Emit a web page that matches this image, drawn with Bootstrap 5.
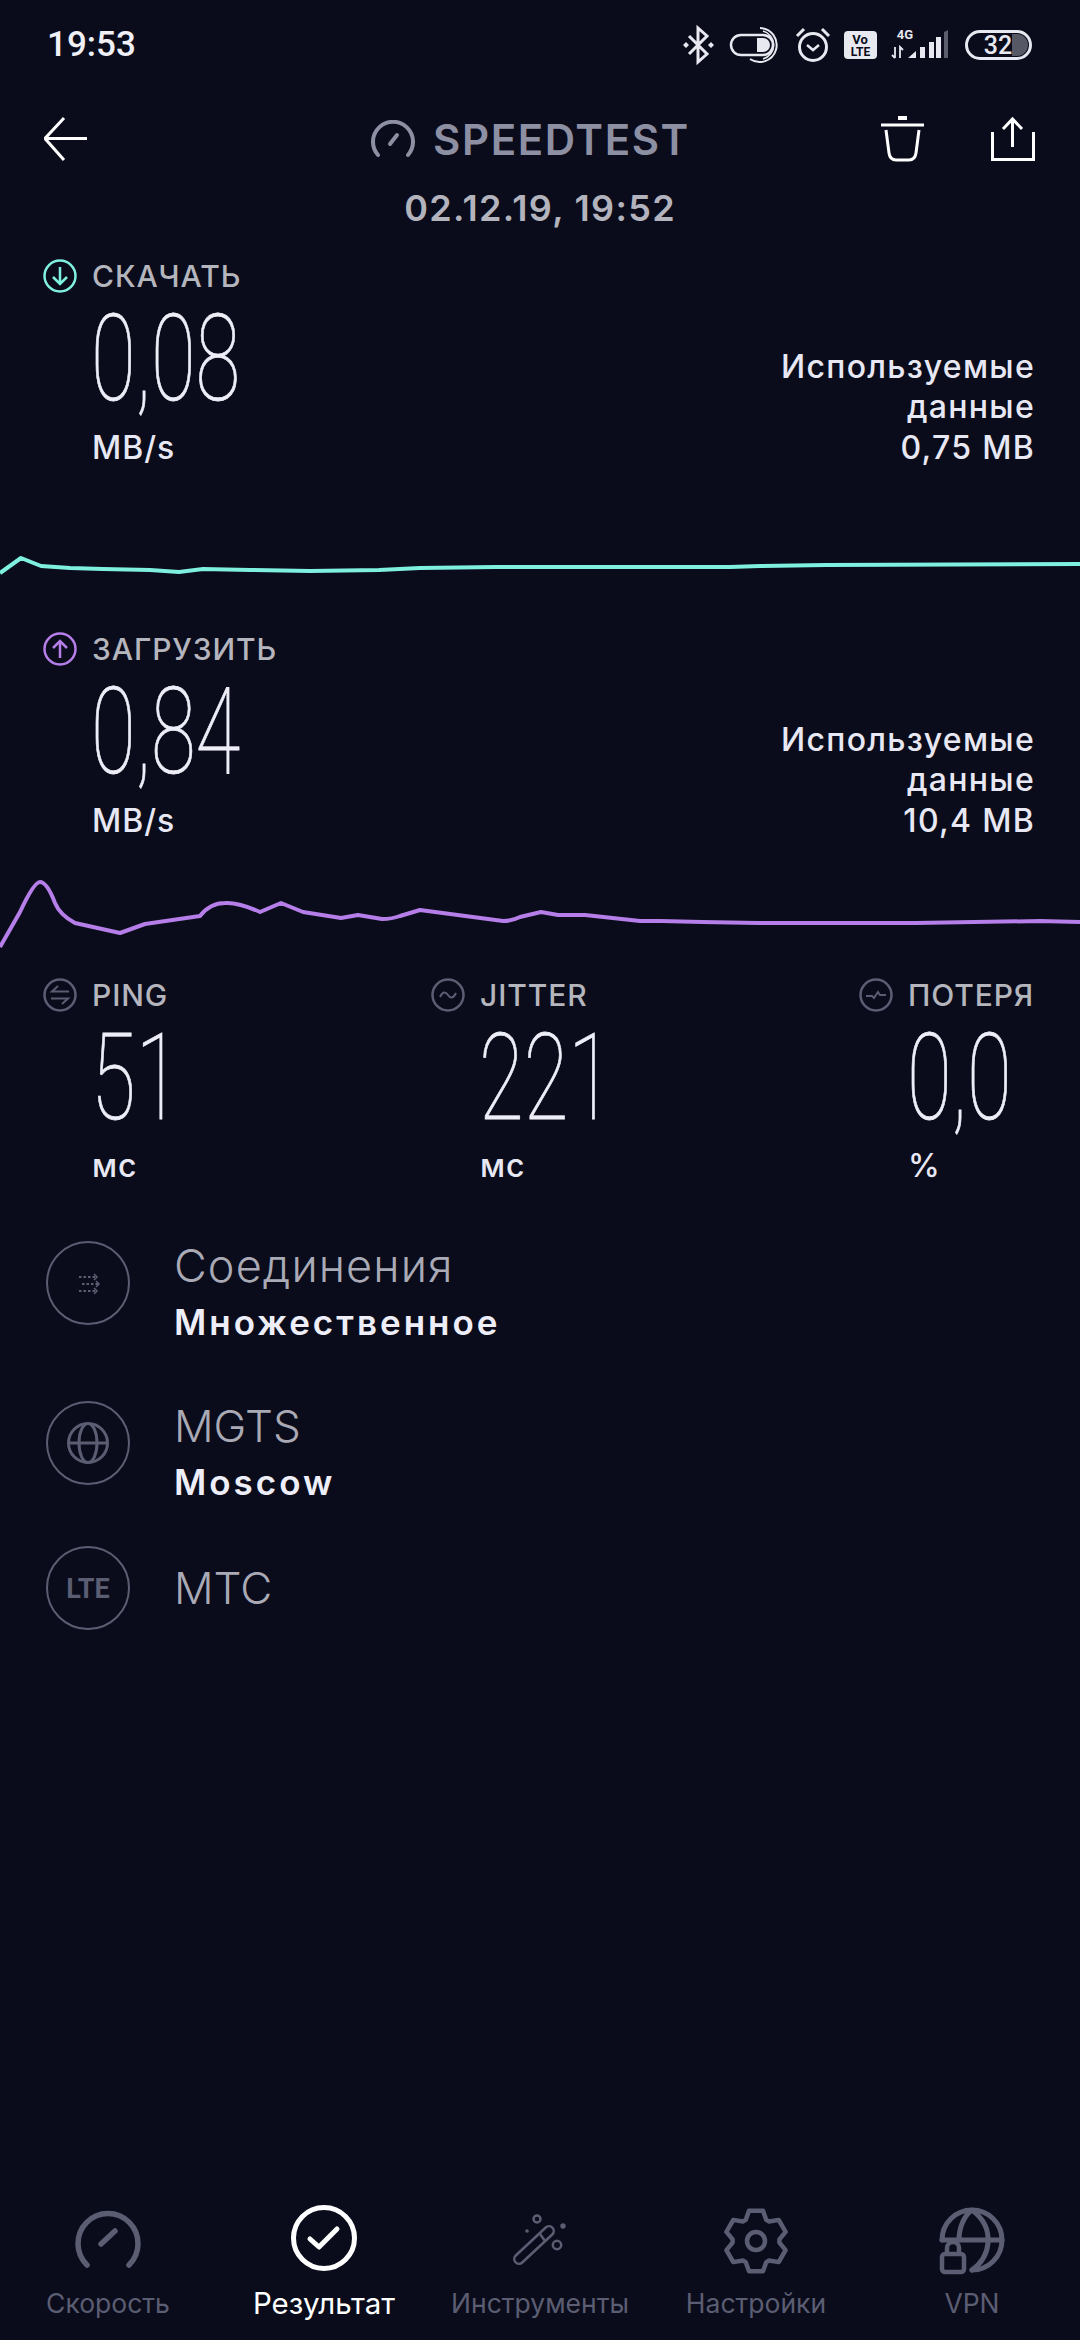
<!DOCTYPE html>
<html lang="ru">
<head>
  <meta charset="UTF-8">
  <meta name="viewport" content="width=device-width, initial-scale=1.0">
  <title>Speedtest</title>
  <link href="https://cdn.jsdelivr.net/npm/bootstrap@5.3.2/dist/css/bootstrap.min.css" rel="stylesheet">
  <style>
    body {
      background-color: #0a0c1b;
      font-family: Inter, "Noto Sans", sans-serif;
      color: #e8e8f4;
    }
    .phone-screen {
      width: 1080px;
      height: 2340px;
      overflow: hidden;
    }
    .status-bar {
      height: 90px;
      padding: 0 45px 0 47px;
    }
    .status-time {
      font-family: Roboto, sans-serif;
      font-size: 35px;
      font-weight: 500;
      color: #f0f0f6;
    }
    .top-bar {
      height: 98px;
      padding: 0 45px 0 44px;
      display: grid;
      grid-template-columns: 1fr auto 1fr;
      align-items: center;
    }
    .top-actions {
      gap: 66px;
    }
    .title-block {
      gap: 18px;
      margin-right: 18px;
      color: #8d8fa3;
      font-size: 42px;
      font-weight: 600;
      letter-spacing: 1.6px;
    }
    .date-line {
      height: 64px;
      line-height: 40px;
      font-size: 36px;
      font-weight: 600;
      letter-spacing: 1.3px;
      color: #b3b3bd;
    }
    .metric-block {
      padding: 0 45px 0 43px;
    }
    .label-row {
      height: 48px;
      gap: 15px;
      font-size: 30px;
      font-weight: 500;
      letter-spacing: 0.9px;
      color: #b5b5bd;
    }
    .big-number {
      height: 116px;
      line-height: 119px;
      padding-left: 48px;
      font-family: Roboto, sans-serif;
      font-weight: 100;
      font-size: 120px;
      color: #eeeef8;
      white-space: nowrap;
      -webkit-text-stroke: 0.8px #eeeef8;
    }
    .big-number span {
      display: inline-block;
      transform: scaleX(0.68);
      transform-origin: left center;
    }
    .unit-text {
      height: 40px;
      line-height: 40px;
      margin-top: 12px;
      padding-left: 49px;
      font-size: 32px;
      font-weight: 500;
      letter-spacing: 1px;
    }
    .used-data {
      width: 360px;
      line-height: 40.5px;
      font-size: 32px;
      font-weight: 500;
      letter-spacing: 1.3px;
    }
    .chart-line {
      display: block;
      width: 1080px;
    }
    .chart-down { height: 157px; }
    .chart-up { height: 130px; }
    .stat-ping { width: 388px; }
    .stat-jitter { width: 428px; }
    .stat-unit {
      margin-top: 11px;
    }
    .info-list {
      margin-top: 52px;
      padding-left: 46px;
    }
    .info-row {
      gap: 44px;
    }
    .info-row-first { margin-bottom: 47px; }
    .info-row-second { margin-bottom: 35px; }
    .info-icon {
      flex: none;
      width: 84px;
      height: 84px;
      margin-top: 3px;
    }
    .info-row-last .info-icon { margin-top: 0; }
    .info-name {
      height: 56px;
      line-height: 56px;
      font-size: 45px;
      font-weight: 300;
      letter-spacing: 1.1px;
      color: #a9aab5;
    }
    .info-name-latin {
      font-size: 44px;
      letter-spacing: 0;
    }
    .info-value {
      height: 57px;
      line-height: 57px;
      font-size: 35px;
      font-weight: 600;
      letter-spacing: 3px;
      color: #eeeef8;
    }
    .bottom-nav {
      height: 137px;
      color: #5b5d72;
    }
    .nav-cell {
      width: 216px;
      font-size: 26.5px;
    }
    .nav-cell svg {
      display: block;
      margin: 0 auto;
    }
    .nav-active {
      color: #ffffff;
      font-size: 29.5px;
    }
    .nav-label {
      line-height: 40px;
      margin-top: 4px;
      white-space: nowrap;
    }
  </style>
</head>
<body>
  <div class="phone-screen d-flex flex-column">

    <!-- Status bar -->
    <div class="status-bar d-flex align-items-center justify-content-between">
      <div class="status-time">19:53</div>
      <svg width="355" height="50" viewBox="680 20 355 50" fill="none" stroke="#e8e8f0" stroke-width="3">
        <path d="M689 36 L707 54 L698 62 V28 L707 36 L689 54"/>
        <path d="M686 42 L689 45 L686 48 L683 45Z M711 42 L714 45 L711 48 L708 45Z" fill="#e8e8f0" stroke="none"/>
        <rect x="731" y="35" width="42" height="20" rx="10" stroke-width="2.5"/>
        <path d="M757 38 H763 A7 7 0 0 1 763 52 H757Z" fill="#e8e8f0" stroke="none"/>
        <path d="M760 28 A17 17 0 1 1 750 59" stroke-width="2"/>
        <path d="M763 31 A14.5 14.5 0 0 1 763 59" stroke-width="1.5"/>
        <circle cx="813" cy="47" r="13.5"/>
        <path d="M807 45 L813 50 L819 45" stroke-width="2.5"/>
        <path d="M797 36 L804 29 M829 36 L822 29"/>
        <rect x="844" y="31" width="33" height="28" rx="4" fill="#e8e8f0" stroke="none"/>
        <text x="860" y="44" text-anchor="middle" font-family="Roboto, sans-serif" font-size="13" font-weight="700" fill="#0a0c1b" stroke="none">Vo</text>
        <text x="860.5" y="56" text-anchor="middle" font-family="Roboto, sans-serif" font-size="12" font-weight="700" fill="#0a0c1b" stroke="none">LTE</text>
        <text x="905" y="39" text-anchor="middle" font-family="Roboto, sans-serif" font-size="13" font-weight="700" fill="#e8e8f0" stroke="none">4G</text>
        <path d="M895 47 V58 M892 55 L895 58 M900 58 V47 L903 50" stroke-width="1.8"/>
        <path d="M908 58 L916 51 V58Z M920 47 H925 V58 H920Z M929 42 H934 V58 H929Z M936 37 H941 V58 H936Z" fill="#e8e8f0" stroke="none"/>
        <path d="M944 32 L948 30 V58 H944Z" fill="#5b5d6c" stroke="none"/>
        <path d="M1012 34 H1017 A11 11 0 0 1 1017 56 H1012Z" fill="#565866" stroke="none"/>
        <rect x="966.5" y="31.5" width="64" height="27" rx="13.5"/>
        <text x="998" y="54" text-anchor="middle" font-family="Roboto, sans-serif" font-size="25" font-weight="500" fill="#e8e8f0" stroke="none">32</text>
      </svg>
    </div>

    <!-- Header -->
    <div class="top-bar">
      <svg width="44" height="46" viewBox="45 117 44 46" fill="none" stroke="#fff" stroke-width="3">
        <path d="M88 139.5 H47 M65 119 L46 139.5 L65 161"/>
      </svg>
      <div class="title-block d-flex align-items-center">
        <svg width="44" height="38" viewBox="372 118 44 38" fill="none" stroke="#8d8fa3" stroke-width="4" stroke-linecap="round">
          <path d="M379 153 A20 20 0 1 1 409 153"/>
          <path d="M391 142 L398 133"/>
        </svg>
        <span>SPEEDTEST</span>
      </div>
      <div class="top-actions d-flex justify-content-end">
        <svg width="44" height="46" viewBox="882 117 44 46" fill="none" stroke="#fff" stroke-width="3">
          <path d="M882 126 H925"/>
          <path d="M899 119 H908" stroke-width="4"/>
          <path d="M887 131 L890 154 Q891 161 897 161 H910 Q916 161 917 154 L920 131"/>
        </svg>
        <svg width="44" height="46" viewBox="992 117 44 46" fill="none" stroke="#fff" stroke-width="3">
          <path d="M1013.5 148 V120 M1004 130 L1013.5 120 L1023 130"/>
          <path d="M993.5 133 V160.5 H1034.5 V133"/>
        </svg>
      </div>
    </div>
    <div class="date-line text-center">02.12.19, 19:52</div>

    <!-- Download -->
    <div class="metric-block d-flex justify-content-between align-items-end">
      <div>
        <div class="label-row d-flex align-items-center">
          <svg width="34" height="34" viewBox="0 0 34 34" fill="none" stroke="#7ff0e0" stroke-width="2.5">
            <circle cx="17" cy="17" r="15.5"/>
            <path d="M17 8 V25 M10 18 L17 25 L24 18"/>
          </svg>
          <span>СКАЧАТЬ</span>
        </div>
        <div class="big-number"><span>0,08</span></div>
        <div class="unit-text">MB/s</div>
      </div>
      <div class="used-data text-end">Используемые<br>данные<br>0,75 MB</div>
    </div>
    <svg class="chart-line chart-down" viewBox="0 468 1080 157" fill="none" stroke="#7ff0e0" stroke-width="4" stroke-linejoin="round">
      <path d="M0 573 L21 558 L41 566 L70 568 L103 569 L150 570 L179 572 L203 569 L250 570 L310 571 L379 570 L420 568 L496 567 L730 567 L760 566 L826 565 L1080 564"/>
    </svg>

    <!-- Upload -->
    <div class="metric-block d-flex justify-content-between align-items-end">
      <div>
        <div class="label-row d-flex align-items-center">
          <svg width="34" height="34" viewBox="0 0 34 34" fill="none" stroke="#b57ee8" stroke-width="2.5">
            <circle cx="17" cy="17" r="15.5"/>
            <path d="M17 26 V9 M10 16 L17 9 L24 16"/>
          </svg>
          <span>ЗАГРУЗИТЬ</span>
        </div>
        <div class="big-number"><span>0,84</span></div>
        <div class="unit-text">MB/s</div>
      </div>
      <div class="used-data text-end">Используемые<br>данные<br>10,4 MB</div>
    </div>
    <svg class="chart-line chart-up" viewBox="0 841 1080 130" fill="none" stroke="#b57ee8" stroke-width="4" stroke-linejoin="round">
      <path d="M0 947 L20 912 Q34 882 40 882 Q47 882 55 903 Q60 915 75 923 L120 933 L145 924 L200 916 Q210 903 225 903 Q238 902 260 912 L281 903 L303 912 L341 918 L358 915 L382 919 Q392 919 400 916 L420 910 L503 921 Q512 921 520 917 L541 912 L558 915 H585 L640 921 H661 L702 922 L758 923 H916 L1040 921 L1080 922"/>
    </svg>

    <!-- Ping, jitter, loss -->
    <div class="metric-block d-flex">
      <div class="stat-ping flex-shrink-0">
        <div class="label-row d-flex align-items-center">
          <svg width="34" height="34" viewBox="0 0 34 34" fill="none" stroke="#5b5d72" stroke-width="2.5">
            <circle cx="17" cy="17" r="15.5"/>
            <path d="M26 13.5 H9 L15 8 M8 20.5 H25 L19 26" stroke-width="2"/>
          </svg>
          <span>PING</span>
        </div>
        <div class="big-number"><span>51</span></div>
        <div class="unit-text stat-unit">мс</div>
      </div>
      <div class="stat-jitter flex-shrink-0">
        <div class="label-row d-flex align-items-center">
          <svg width="34" height="34" viewBox="0 0 34 34" fill="none" stroke="#5b5d72" stroke-width="2.5">
            <circle cx="17" cy="17" r="15.5"/>
            <path d="M9 19 Q13 11 17 17 T25 15" stroke-width="2"/>
          </svg>
          <span>JITTER</span>
        </div>
        <div class="big-number"><span>221</span></div>
        <div class="unit-text stat-unit">мс</div>
      </div>
      <div class="flex-shrink-0">
        <div class="label-row d-flex align-items-center">
          <svg width="34" height="34" viewBox="0 0 34 34" fill="none" stroke="#5b5d72" stroke-width="2.5">
            <circle cx="17" cy="17" r="15.5"/>
            <path d="M7 18 H13 L15 20 L19 14 L21 17 H27" stroke-width="2"/>
          </svg>
          <span>ПОТЕРЯ</span>
        </div>
        <div class="big-number"><span>0,0</span></div>
        <div class="unit-text stat-unit">%</div>
      </div>
    </div>

    <!-- Connection info -->
    <div class="info-list">
      <div class="info-row info-row-first d-flex align-items-start">
        <svg class="info-icon" viewBox="0 0 84 84" fill="none" stroke="#5b5d72" stroke-width="2">
          <circle cx="42" cy="42" r="41"/>
          <path d="M33 36 H50 M36 43 H52 M33 50 H50" stroke-dasharray="2.5 2"/>
          <path d="M48 33 L51 36 L48 39 M50 40 L53 43 L50 46 M48 47 L51 50 L48 53" stroke-width="1.5"/>
        </svg>
        <div>
          <div class="info-name">Соединения</div>
          <div class="info-value">Множественное</div>
        </div>
      </div>
      <div class="info-row info-row-second d-flex align-items-start">
        <svg class="info-icon" viewBox="0 0 84 84" fill="none" stroke="#5b5d72" stroke-width="2">
          <circle cx="42" cy="42" r="41"/>
          <g stroke-width="3">
            <circle cx="42" cy="42" r="19.5"/>
            <ellipse cx="42" cy="42" rx="9" ry="19.5"/>
            <path d="M22.5 42 H61.5"/>
          </g>
        </svg>
        <div>
          <div class="info-name info-name-latin">MGTS</div>
          <div class="info-value">Moscow</div>
        </div>
      </div>
      <div class="info-row info-row-last d-flex align-items-center">
        <svg class="info-icon" viewBox="0 0 84 84" fill="none" stroke="#5b5d72" stroke-width="2">
          <circle cx="42" cy="42" r="41"/>
          <text x="42" y="52" text-anchor="middle" font-family="Roboto, sans-serif" font-size="27" font-weight="700" fill="#5b5d72" stroke="none">LTE</text>
        </svg>
        <div class="info-name info-name-latin">МТС</div>
      </div>
    </div>

    <!-- Bottom navigation -->
    <div class="bottom-nav d-flex mt-auto text-center">
      <div class="nav-cell">
        <svg width="76" height="76" viewBox="-38 -38 76 76" fill="none" stroke="currentColor" stroke-width="5.5" stroke-linecap="round">
          <path d="M-21 24 A30 30 0 1 1 21 24"/>
          <path d="M-7 3 L7 -10"/>
        </svg>
        <div class="nav-label">Скорость</div>
      </div>
      <div class="nav-cell nav-active">
        <svg width="76" height="76" viewBox="-38 -35 76 76" fill="none" stroke="currentColor" stroke-width="5" stroke-linecap="round" stroke-linejoin="round">
          <circle r="30.5"/>
          <path d="M-14 1 L-5 9 L13 -9"/>
        </svg>
        <div class="nav-label">Результат</div>
      </div>
      <div class="nav-cell">
        <svg width="76" height="76" viewBox="-38 -38 76 76" fill="none" stroke="currentColor" stroke-width="2.5">
          <path d="M-21 18 L9 -10" stroke-width="12" stroke-linecap="round"/>
          <path d="M-21 18 L9 -10" stroke="#0a0c1b" stroke-width="7" stroke-linecap="round"/>
          <path d="M0 -7 L5 0"/>
          <circle cx="-3" cy="-22" r="3.5"/>
          <circle cx="23" cy="-15" r="2.7" fill="currentColor" stroke="none"/>
          <circle cx="-13" cy="-10" r="1.8" fill="currentColor" stroke="none"/>
          <circle cx="17" cy="4" r="4.2"/>
        </svg>
        <div class="nav-label">Инструменты</div>
      </div>
      <div class="nav-cell">
        <svg width="76" height="76" viewBox="-38 -38 76 76" fill="none" stroke="currentColor" stroke-width="4.5" stroke-linejoin="round">
          <path d="M-7 -30.2 L7 -30.2 L10.3 -21.1 L13.1 -19.5 L22.7 -21.1 L29.6 -9.1 L23.4 -1.6 L23.4 1.6 L29.6 9.1 L22.7 21.1 L13.1 19.5 L10.3 21.1 L7 30.2 L-7 30.2 L-10.3 21.1 L-13.1 19.5 L-22.7 21.1 L-29.6 9.1 L-23.4 1.6 L-23.4 -1.6 L-29.6 -9.1 L-22.7 -21.1 L-13.1 -19.5 L-10.3 -21.1Z"/>
          <circle r="9"/>
        </svg>
        <div class="nav-label">Настройки</div>
      </div>
      <div class="nav-cell">
        <svg width="76" height="76" viewBox="-38 -38 76 76" fill="none" stroke="currentColor" stroke-width="5" stroke-linecap="round" stroke-linejoin="round">
          <path d="M-30 -1 A30 30 0 1 1 0 29"/>
          <path d="M-30 -1 H30"/>
          <path d="M-13 -1 C-13 -15 -7 -26 0 -31 C12 -22 17 -10 16 2 C15 13 10 22 0 29"/>
          <rect x="-30" y="13" width="22" height="18" rx="3" stroke-width="4.5"/>
          <path d="M-25 12 V7 A6 6 0 0 1 -13 7 V12" stroke-width="4.5"/>
        </svg>
        <div class="nav-label">VPN</div>
      </div>
    </div>
  </div>

  <script src="https://cdn.jsdelivr.net/npm/bootstrap@5.3.2/dist/js/bootstrap.bundle.min.js"></script>
</body>
</html>
